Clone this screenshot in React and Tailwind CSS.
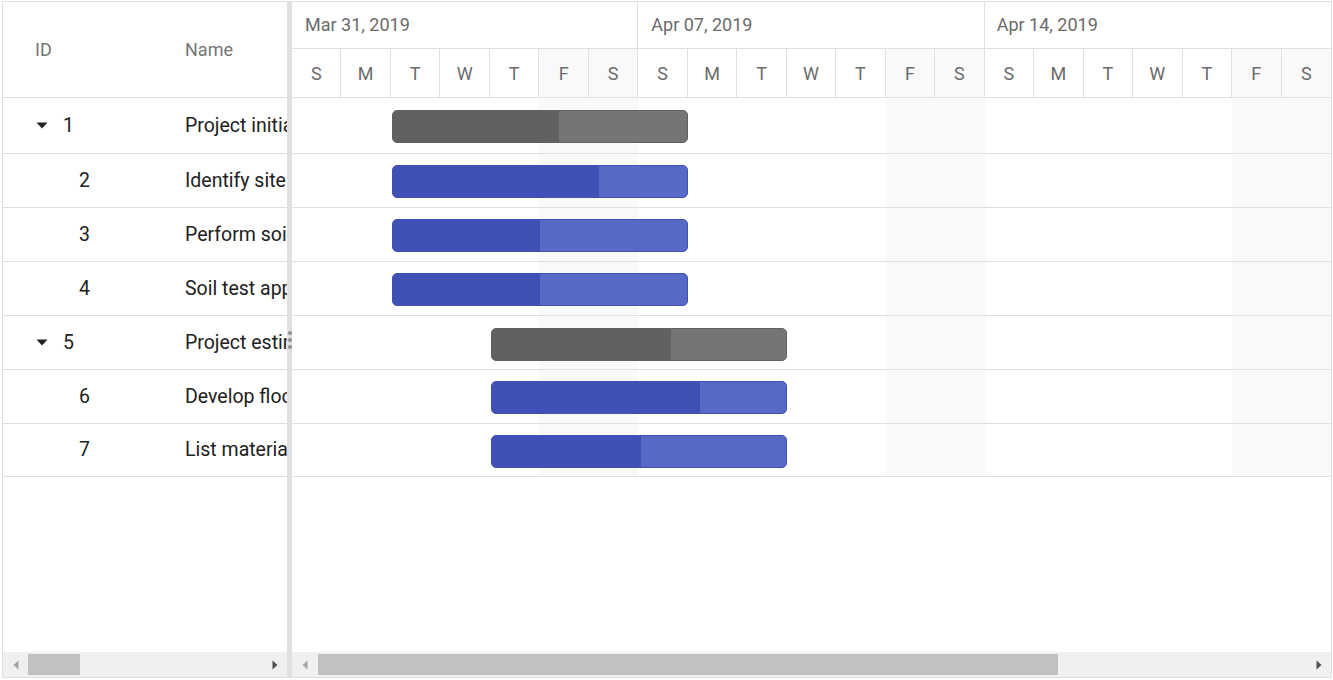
import React from "react";

const rows = [
  { id: 1, name: "Project initiation", parent: true, start: 2, prog: 56.6, h: "h-[56px]" },
  { id: 2, name: "Identify site location", parent: false, start: 2, prog: 70, h: "h-[54px]" },
  { id: 3, name: "Perform soil test", parent: false, start: 2, prog: 50, h: "h-[54px]" },
  { id: 4, name: "Soil test approval", parent: false, start: 2, prog: 50, h: "h-[54px]" },
  { id: 5, name: "Project estimation", parent: true, start: 4, prog: 61, h: "h-[54px]" },
  { id: 6, name: "Develop floor plan for estimation", parent: false, start: 4, prog: 70.7, h: "h-[54px]" },
  { id: 7, name: "List materials", parent: false, start: 4, prog: 50.8, h: "h-[53px]" },
];

const weekDays = ["S", "M", "T", "W", "T", "F", "S"];
const days = [...weekDays, ...weekDays, ...weekDays];
const weeks = ["Mar 31, 2019", "Apr 07, 2019", "Apr 14, 2019"];
const DAY = 1039 / 21;

function Caret() {
  return (
    <svg width="12" height="7" viewBox="0 0 12 7" className="shrink-0">
      <path d="M0.5 0.5 L11.5 0.5 L6 6.5 Z" fill="#212121" />
    </svg>
  );
}

function Bar({ row }) {
  const parent = row.parent;
  const width = DAY * 6;
  const progPx = (width * row.prog) / 100;
  return (
    <div
      className={
        parent
          ? "absolute top-[12px] h-[33px] rounded-[5px] border-[1.5px] border-[#616161] bg-[#757575] overflow-hidden"
          : "absolute top-[11px] h-[33px] rounded-[5px] border-[1.5px] border-[#3f51b5] bg-[#5869c6] overflow-hidden"
      }
      style={{ left: DAY * row.start + 1, width: width - 1 }}
    >
      <div
        className={parent ? "h-full bg-[#616161]" : "h-full bg-[#3f51b5]"}
        style={{ width: progPx - 1.5 }}
      />
    </div>
  );
}

function ScrollArrow({ dir, dark }) {
  if (dir === "left") {
    return (
      <svg width="6" height="10" viewBox="0 0 6 10">
        <path d="M5.5 0.5 L0.5 5 L5.5 9.5 Z" fill={dark ? "#505050" : "#a3a3a3"} />
      </svg>
    );
  }
  return (
    <svg width="6" height="10" viewBox="0 0 6 10">
      <path d="M0.5 0.5 L5.5 5 L0.5 9.5 Z" fill={dark ? "#505050" : "#a3a3a3"} />
    </svg>
  );
}

export default function App() {
  return (
    <div className="w-[1333px] h-[680px] bg-white pl-[2px] pt-[1px] font-[Roboto,sans-serif]">
      <div className="w-[1330px] h-[677px] border border-[#e0e0e0] flex">
        {/* Left grid pane */}
        <div className="w-[284px] h-full flex flex-col">
          <div className="h-[96px] shrink-0 border-b border-[#e0e0e0] flex items-center text-[18px] text-[#757575]">
            <div className="w-[166px] pl-[32px]">ID</div>
            <div className="pl-[16px]">Name</div>
          </div>
          {rows.map((r) => (
            <div
              key={r.id}
              className={
                r.h +
                " shrink-0 border-b border-[#e0e0e0] flex items-center text-[19.5px] text-[#212121] overflow-hidden"
              }
            >
              <div className="w-[166px] shrink-0 flex items-center">
                {r.parent ? (
                  <div className="flex items-center pl-[33px]">
                    <Caret />
                    <span className="ml-[15px]">{r.id}</span>
                  </div>
                ) : (
                  <span className="pl-[76px]">{r.id}</span>
                )}
              </div>
              <div className="pl-[16px] whitespace-nowrap overflow-hidden">{r.name}</div>
            </div>
          ))}
          <div className="flex-1" />
          <div className="h-[25px] shrink-0 bg-[#f0f0f0] flex items-center">
            <div className="w-[25px] flex justify-center">
              <ScrollArrow dir="left" />
            </div>
            <div className="w-[52px] h-[21px] bg-[#c1c1c1]" />
            <div className="flex-1" />
            <div className="w-[25px] flex justify-center">
              <ScrollArrow dir="right" dark />
            </div>
          </div>
        </div>

        {/* Splitter */}
        <div className="w-[5px] h-full bg-[#e0e0e0] flex flex-col items-center justify-center gap-[3px]">
          <div className="w-[4px] h-[4px] rounded-full bg-[#8f8f8f]" />
          <div className="w-[4px] h-[4px] rounded-full bg-[#8f8f8f]" />
          <div className="w-[4px] h-[4px] rounded-full bg-[#8f8f8f]" />
        </div>

        {/* Chart pane */}
        <div className="w-[1039px] h-full flex flex-col">
          <div className="h-[96px] shrink-0 flex flex-col border-b border-[#e0e0e0] text-[18px] text-[#6b6b6b]">
            <div className="h-[47px] grid grid-cols-3 border-b border-[#e0e0e0]">
              {weeks.map((w, i) => (
                <div
                  key={w}
                  className={
                    i < 2
                      ? "border-r border-[#e0e0e0] flex items-center pl-[13px] pb-[1px]"
                      : "flex items-center pl-[12px] pb-[1px]"
                  }
                >
                  {w}
                </div>
              ))}
            </div>
            <div className="flex-1 grid grid-cols-[repeat(21,minmax(0,1fr))]">
              {days.map((d, i) => {
                const weekend = i % 7 >= 5;
                const last = i === 20;
                return (
                  <div
                    key={i}
                    className={
                      (weekend ? "bg-[#f9f9f9] " : "") +
                      (last ? "" : "border-r border-[#e0e0e0] ") +
                      "flex items-center justify-center"
                    }
                  >
                    {d}
                  </div>
                );
              })}
            </div>
          </div>

          <div className="relative shrink-0">
            <div className="absolute inset-0 grid grid-cols-[repeat(21,minmax(0,1fr))]">
              {days.map((d, i) => (
                <div key={i} className={i % 7 >= 5 ? "bg-[#f9f9f9]" : ""} />
              ))}
            </div>
            {rows.map((r) => (
              <div key={r.id} className={"relative " + r.h + " border-b border-[#e0e0e0]"}>
                <Bar row={r} />
              </div>
            ))}
          </div>
          <div className="flex-1" />
          <div className="h-[25px] shrink-0 bg-[#f0f0f0] flex items-center">
            <div className="w-[26px] flex justify-center">
              <ScrollArrow dir="left" />
            </div>
            <div className="w-[740px] h-[21px] bg-[#c1c1c1]" />
            <div className="flex-1" />
            <div className="w-[25px] flex justify-center">
              <ScrollArrow dir="right" dark />
            </div>
          </div>
        </div>
      </div>
    </div>
  );
}
